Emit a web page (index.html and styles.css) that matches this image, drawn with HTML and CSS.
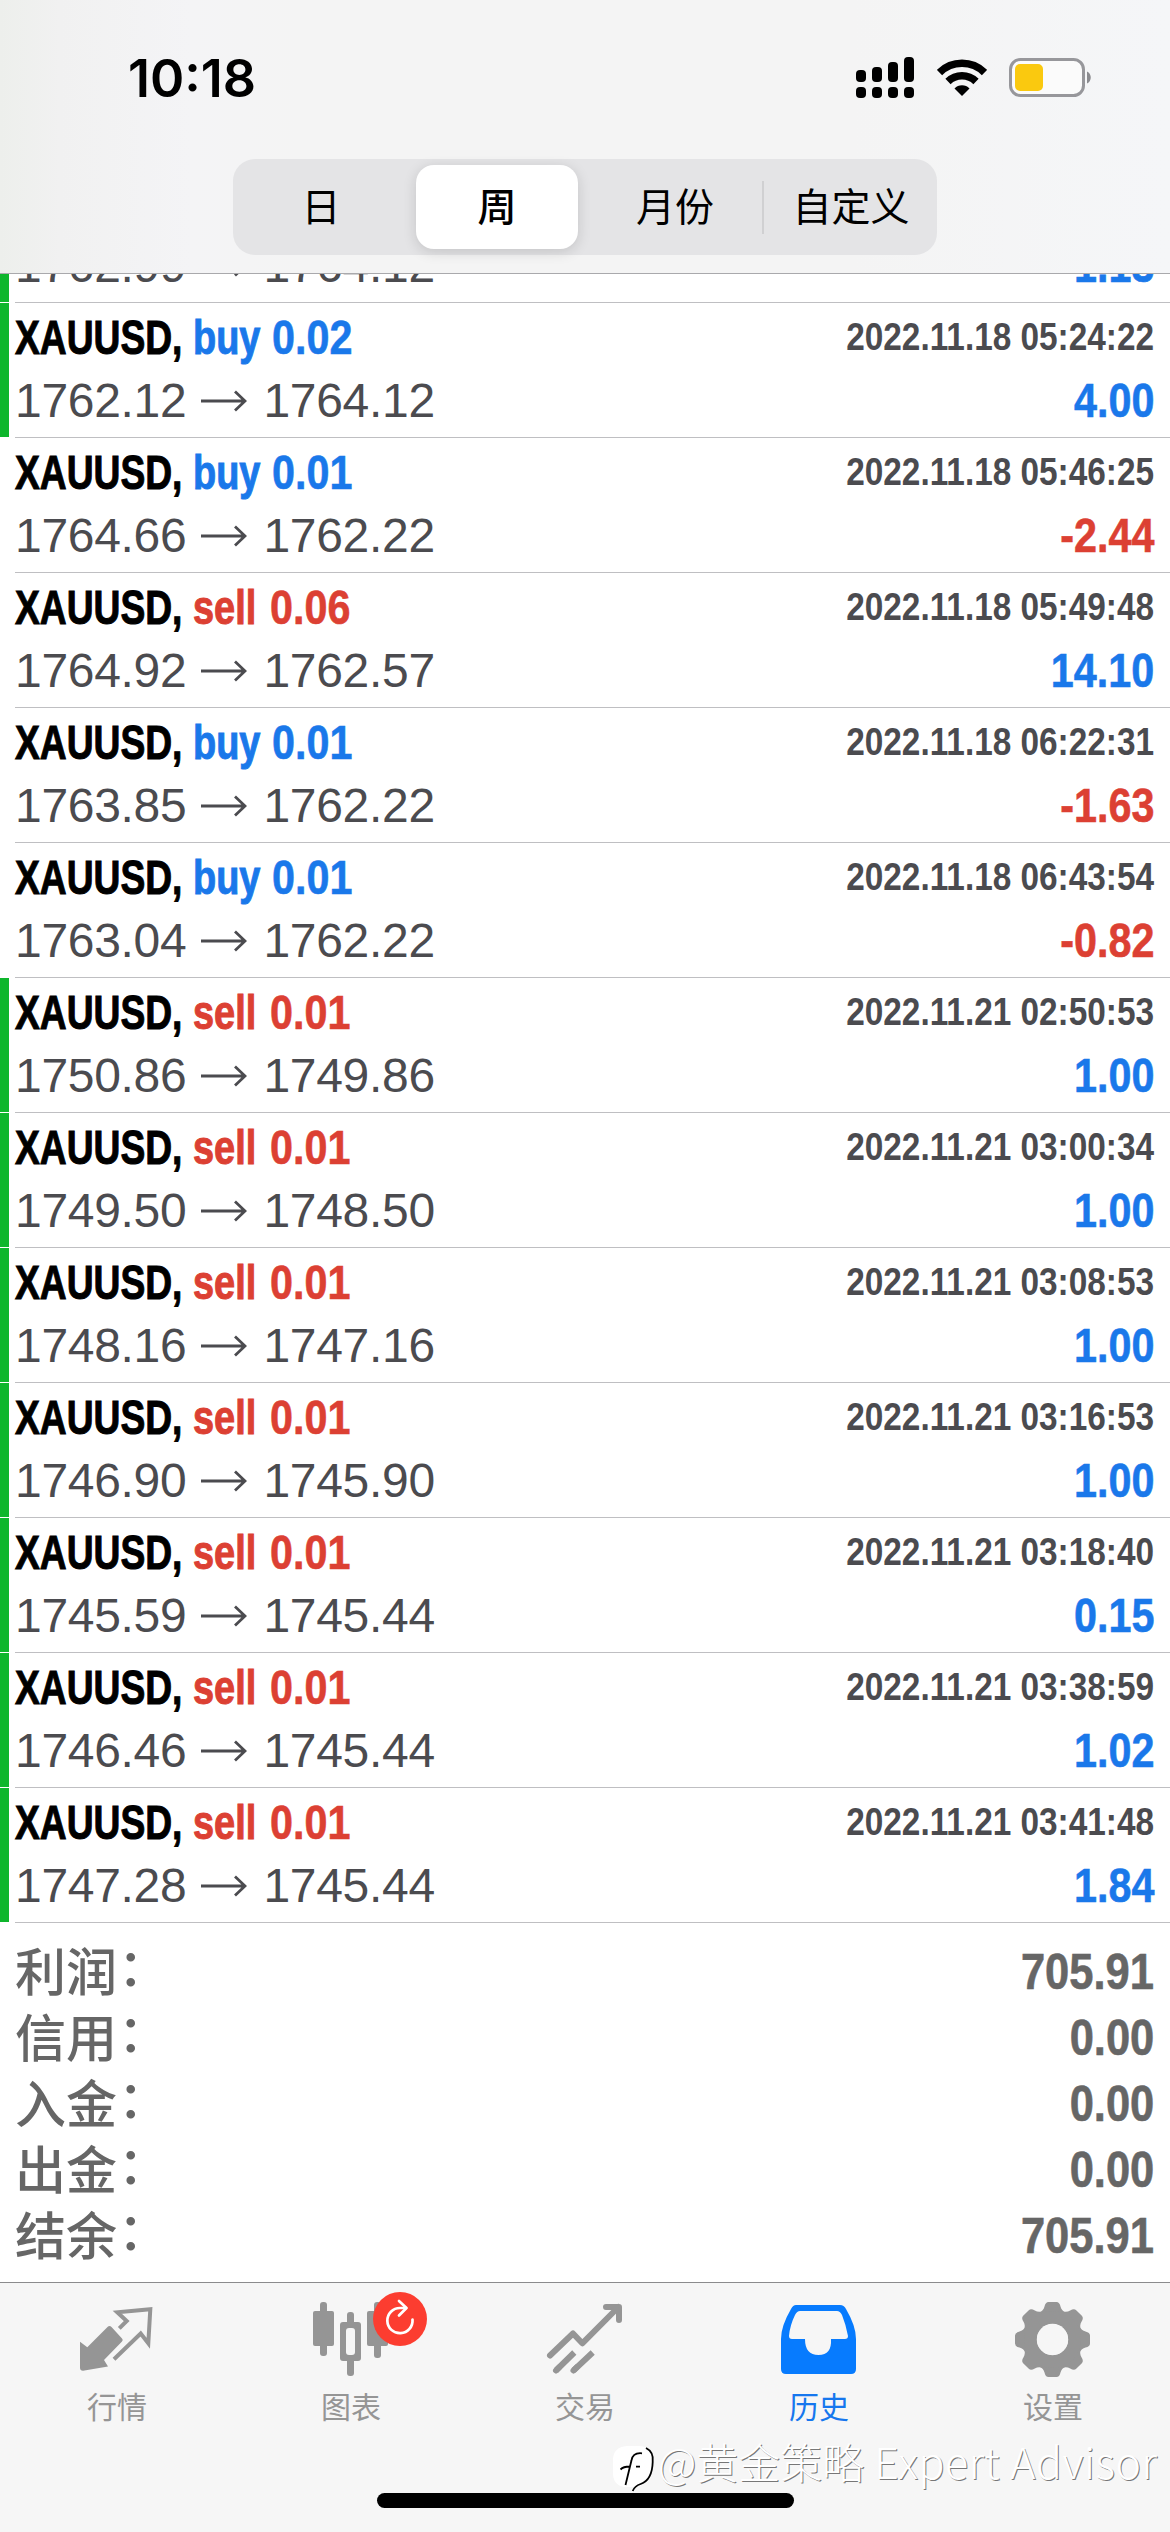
FILE: index.html
```html
<!DOCTYPE html>
<html lang="zh-CN">
<head>
<meta charset="utf-8">
<title>历史</title>
<link rel="stylesheet" href="styles.css">
</head>
<body>
<header class="header">
  <div class="status">
    <span class="time">10:18</span>
    <svg class="signal" width="58" height="42" viewBox="0 0 58 42"><rect x="0" y="13" width="10" height="12" rx="4"/><rect x="16" y="10" width="10" height="15" rx="4"/><rect x="32" y="5" width="10" height="20" rx="4"/><rect x="48" y="0" width="10" height="25" rx="4"/><rect x="0" y="30" width="10" height="11" rx="4"/><rect x="16" y="30" width="10" height="11" rx="4"/><rect x="32" y="30" width="10" height="11" rx="4"/><rect x="48" y="30" width="10" height="11" rx="4"/></svg>
    <svg class="wifi" width="50" height="38" viewBox="0 0 50 38"><g fill="none" stroke="#000" stroke-width="7.5"><path d="M2.500 13.500A32 32 0 0 1 47.500 13.500"/><path d="M11 22.500A20 20 0 0 1 39 22.500"/></g><path d="M17.500 29.500a10.500 10.500 0 0 1 15 0L25 37z"/></svg>
    <svg class="battery" width="83" height="40" viewBox="0 0 83 40"><rect x="1.500" y="1.500" width="73" height="36" rx="10" fill="#fbfbfb" stroke="#97979b" stroke-width="3"/><rect x="6" y="6" width="28" height="27" rx="5" fill="#fac90f"/><path d="M78 13.500c5 2 5 10 0 12z" fill="#8b8b8f"/></svg>
  </div>
  <nav class="segments">
    <span class="segment">日</span>
    <span class="segment selected">周</span>
    <span class="segment month">月份</span>
    <span class="segment divided">自定义</span>
  </nav>
</header>
<main class="content">
  <section class="deals" id="deals"></section>
  <section class="summary">
    <div class="total"><span>利润<i>：</i></span><b>705.91</b></div>
    <div class="total"><span>信用<i>：</i></span><b>0.00</b></div>
    <div class="total"><span>入金<i>：</i></span><b>0.00</b></div>
    <div class="total"><span>出金<i>：</i></span><b>0.00</b></div>
    <div class="total"><span>结余<i>：</i></span><b>705.91</b></div>
  </section>
</main>
<footer class="tabbar">
  <nav class="tabs">
    <div class="tab">
      <svg width="90" height="84" viewBox="0 0 90 84"><path d="M8 41.700L15.300 47.300 35.500 27q2-2 4 0L50 38.500q1.500 1.500 0 3L32 60l4 6.500-25 4.200q-3 0-3-3z"/><path d="M47.300 28.300L54.700 21 45.300 12.300 78.300 9.300 76.300 43.300 68.700 33.500 42 59.300" fill="none" stroke="#959595" stroke-width="4"/></svg>
      <span>行情</span>
    </div>
    <div class="tab">
      <svg width="90" height="84" viewBox="0 0 90 84"><rect x="14" y="2" width="7" height="54" rx="3"/><rect x="7" y="11" width="21" height="35" rx="2"/><rect x="41" y="12" width="7" height="64" rx="3"/><rect x="34" y="22" width="21" height="39" rx="3"/><rect x="40" y="28" width="9" height="27" rx="3" fill="#f6f6f6"/><rect x="68" y="2" width="7" height="56" rx="3"/><rect x="61" y="11" width="21" height="35" rx="2"/></svg>
      <svg class="badge" width="54" height="54" viewBox="0 0 54 54"><circle cx="27" cy="27" r="27" fill="#fc3d30"/><g fill="none" stroke="#fff" stroke-width="2.700" stroke-linecap="round" stroke-linejoin="round"><path d="M39.500 27.500A12.600 12.600 0 1 1 27 16H33"/><path d="M26 9l7.500 7-7.500 7.500"/></g></svg>
      <span>图表</span>
    </div>
    <div class="tab">
      <svg width="90" height="84" viewBox="0 0 90 84"><g fill="none" stroke="#959595" stroke-width="6" stroke-linecap="round" stroke-linejoin="round"><path d="M10 55.500L33 33.500 42.300 43.300 78.500 7M66 7H79V20"/><path d="M16 70.500L34.300 52.500M33.500 70.500L52.700 52.500" stroke-linecap="butt"/><path d="M16 70.500l3-3M33.500 70.500l3-3"/></g></svg>
      <span>交易</span>
    </div>
    <div class="tab active">
      <svg width="90" height="84" viewBox="0 0 90 84"><path fill-rule="evenodd" d="M22 5H66q4 0 6 4 10 17 10 30v30q0 5-5 5H12q-5 0-5-5V39Q7 26 17 9q2-4 5-4zM26 11q-3 0-5 4-5 10-6 21 0 3 3 3H31q0 16 13.500 16T57 39H71q3 0 3-3-2-11-6-21-2-4-5-4z"/></svg>
      <span>历史</span>
    </div>
    <div class="tab">
      <svg width="90" height="84" viewBox="0 0 90 84">
        <defs><path id="tooth" d="M-13-27Q-9-29-8-33-7-37.500-4-37.500H4Q7-37.500 8-33 9-29 13-27L10-16H-10z"/></defs>
        <g transform="translate(44.500 39.500)"><use href="#tooth"/><use href="#tooth" transform="rotate(45)"/><use href="#tooth" transform="rotate(90)"/><use href="#tooth" transform="rotate(135)"/><use href="#tooth" transform="rotate(180)"/><use href="#tooth" transform="rotate(225)"/><use href="#tooth" transform="rotate(270)"/><use href="#tooth" transform="rotate(315)"/><circle r="22" fill="none" stroke="#959595" stroke-width="13"/><circle r="15.700" fill="#f6f6f6"/></g>
      </svg>
      <span>设置</span>
    </div>
  </nav>
  <div class="home"></div>
  <div class="watermark">
    <svg width="46" height="50" viewBox="0 0 46 50"><path d="M15 3H27q13 0 13 14v13q-1 10-16 14H12Q1 42 1 30V17Q1 4 15 3z" fill="#fff"/><path d="M30 10.300q-9-1-10.500 7L13.500 42M8.500 26.500q3-3 9-3M24 23.700h4M34 5q8 4 6.700 14-.5 18-12 22-6 2-8 7" fill="none" stroke="#000" stroke-width="1.800"/></svg>
    <span class="wm-name">@黄金策略</span><span class="wm-latin">Expert Advisor</span>
  </div>
</footer>
<script src="script.js"></script>
</body>
</html>
```
FILE: script.js
```js
const deals = [
  ["buy 0.02", "2022.11.18 05:24:22", "1762.12", "1764.12", "4.00", 1],
  ["buy 0.01", "2022.11.18 05:46:25", "1764.66", "1762.22", "-2.44", 0],
  ["sell 0.06", "2022.11.18 05:49:48", "1764.92", "1762.57", "14.10", 0],
  ["buy 0.01", "2022.11.18 06:22:31", "1763.85", "1762.22", "-1.63", 0],
  ["buy 0.01", "2022.11.18 06:43:54", "1763.04", "1762.22", "-0.82", 0],
  ["sell 0.01", "2022.11.21 02:50:53", "1750.86", "1749.86", "1.00", 1],
  ["sell 0.01", "2022.11.21 03:00:34", "1749.50", "1748.50", "1.00", 1],
  ["sell 0.01", "2022.11.21 03:08:53", "1748.16", "1747.16", "1.00", 1],
  ["sell 0.01", "2022.11.21 03:16:53", "1746.90", "1745.90", "1.00", 1],
  ["sell 0.01", "2022.11.21 03:18:40", "1745.59", "1745.44", "0.15", 1],
  ["sell 0.01", "2022.11.21 03:38:59", "1746.46", "1745.44", "1.02", 1],
  ["sell 0.01", "2022.11.21 03:41:48", "1747.28", "1745.44", "1.84", 1]
];
const arrow = '<svg class="arrow" width="46" height="22" viewBox="0 0 46 22"><path d="M0 11h44M34 1.5l10 9.500-10 9.500" fill="none" stroke="#4b4b4f" stroke-width="2.8"/></svg>';

const resultLine = (open, close, profit) =>
  `<div class="line"><div class="prices"><span>${open}</span>${arrow}<span>${close}</span></div><span class="profit ${profit < 0 ? "sell" : "buy"}">${profit}</span></div>`;

// The oldest visible deal is scrolled under the header; only its second line shows.
const scrolled = `<article class="deal target scrolled">${resultLine("1762.99", "1764.12", "1.13")}</article>`;

document.getElementById("deals").innerHTML = scrolled + deals.map(([order, date, open, close, profit, target]) => {
  const [side, volume] = order.split(" ");
  return `<article class="deal${target ? " target" : ""}">
    <div class="line"><div class="order"><span class="symbol">XAUUSD,</span><span class="side ${side}">${side}</span><span class="volume ${side}">${volume}</span></div><span class="date">${date}</span></div>
    ${resultLine(open, close, profit)}
  </article>`;
}).join("");
```
FILE: styles.css
```css
* { box-sizing: border-box; }
body {
  margin: 0;
  width: 1170px;
  height: 2532px;
  overflow: hidden;
  display: flex;
  flex-direction: column;
  background: #fff;
  font-family: "Liberation Sans", "Noto Sans CJK SC", sans-serif;
}
.header {
  flex: none;
  height: 274px;
  border-bottom: 1px solid #a9a9ac;
  background: linear-gradient(90deg, #edefec 0, #f1f1f1 60px, #f4f4f6 190px, #f4f4f4 300px, #f4f4f4 850px, #f5f6f8 1170px);
}
.status { display: flex; height: 159px; padding: 57px 78px 0 128px; }
.time { font: 600 52px/43px Inter, sans-serif; margin-right: auto; }
.wifi { margin: 2px 22px 0 23px; }
.battery { margin-top: 1px; }
.segments {
  display: grid;
  grid-template-columns: repeat(4, 1fr);
  width: 704px;
  height: 96px;
  margin-left: 233px;
  border-radius: 22px;
  background: #e4e4e6;
  font: 400 39px/78px "Noto Sans CJK SC", sans-serif;
  padding: 6px 0;
  text-align: center;
}
.selected { margin: 0 7px; border-radius: 18px; background: #fff; box-shadow: 0 3px 14px rgba(0,0,0,.14); font-weight: 500; }
.month { padding-left: 4px; }
.divided { padding-left: 4px; background: linear-gradient(#d0d0d2, #d0d0d2) 1px 16px / 2px 53px no-repeat; }

.content { flex: 1; min-height: 0; }
.deals { height: 1649px; overflow: hidden; display: flex; flex-direction: column; justify-content: flex-end; }
.deal {
  flex: none;
  height: 135px;
  padding: 3px 16px 0 15px;
  background: linear-gradient(#bfbfc2, #bfbfc2) 15px 100% / 1155px 1px no-repeat;
}
.target {
  background:
    linear-gradient(#bfbfc2, #bfbfc2) 15px 100% / 1155px 1px no-repeat,
    linear-gradient(#fff, #fff) 0 100% / 15px 1px no-repeat,
    linear-gradient(#0eb62c, #0eb62c) 0 0 / 9px 100% no-repeat;
}
.scrolled { height: 69px; padding-top: 0; }
.line { display: flex; justify-content: space-between; height: 63px; line-height: 63px; white-space: nowrap; color: #4b4b4f; }
.order, .prices { display: flex; align-items: center; }
.order, .profit { font-size: 48px; font-weight: 700; }
.order span { transform-origin: 0 50%; -webkit-text-stroke: 1px currentColor; }
.symbol { color: #000; width: 178px; transform: scaleX(.775); }
.side { width: 79px; transform: scaleX(.79); }
.side.sell { width: 77px; }
.order .volume { transform: scaleX(.86); -webkit-text-stroke-width: .6px; }
.buy { color: #1a78ea; }
.sell { color: #dc4033; }
.date { font-size: 39px; font-weight: 700; line-height: 61px; transform: scaleX(.855); transform-origin: 100% 50%; }
.profit { transform: scaleX(.86); transform-origin: 100% 50%; -webkit-text-stroke: .6px currentColor; }
.prices { font-size: 48px; letter-spacing: -.3px; }
.arrow { margin: 0 16px 0 15px; }

.summary { padding: 16px 16px 0 15px; color: #666; }
.total { display: flex; justify-content: space-between; height: 66px; line-height: 66px; font-size: 51px; }
.total span { font-family: "Noto Sans CJK SC", sans-serif; font-weight: 500; line-height: 60px; }
.total i { font-style: normal; position: relative; top: -5px; left: 1px; }
.total b { font-size: 50px; transform: scaleX(.87); transform-origin: 100% 50%; -webkit-text-stroke: .6px currentColor; }

.tabbar { position: relative; flex: none; height: 250px; background: #f6f6f6; border-top: 1px solid #8b8b8d; }
.tabs { display: grid; grid-template-columns: repeat(5, 234px); padding-top: 17px; }
.tab { position: relative; display: flex; flex-direction: column; align-items: center; color: #959595; fill: #959595; font: 400 30px/43px "Noto Sans CJK SC", sans-serif; }
.active { color: #1677ee; fill: #077bfe; }
.badge { position: absolute; left: 139px; top: -8px; }
.home { width: 417px; height: 15px; border-radius: 8px; background: #000; margin: 66px auto 0; }
.watermark { position: absolute; left: 612px; top: 160px; display: flex; color: #fff; font: 300 42px/35px "Noto Sans CJK SC", sans-serif; text-shadow: 1px 1px 0 #777; white-space: nowrap; }
.wm-latin { margin-left: 10px; font-size: 43px; letter-spacing: .5px; }
```
